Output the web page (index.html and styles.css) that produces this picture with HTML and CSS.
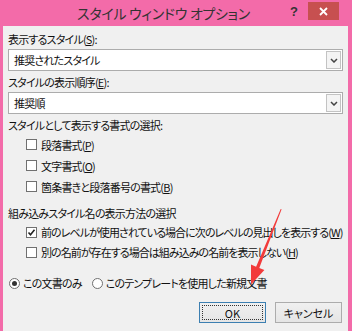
FILE: index.html
```html
<!DOCTYPE html>
<html lang="ja">
<head>
    <meta charset="UTF-8">
    <title>スタイル ウィンドウ オプション</title>
    <link rel="stylesheet" href="styles.css">
</head>
<body>

<div class="window">
    <div class="titlebar">
        <span class="title">スタイル ウィンドウ オプション</span>
        <span class="help">?</span>
        <span class="close">
            <svg width="9" height="9" viewBox="0 0 9 9"><path d="M1 1L8 8M8 1L1 8" stroke="#fff" stroke-width="1.8"/></svg>
        </span>
    </div>

    <div class="content">
        <div class="label">表示するスタイル(<u>S</u>):</div>
        <div class="select">
            <span class="value">推奨されたスタイル</span>
            <span class="drop"><svg width="8" height="5" viewBox="0 0 8 5"><path d="M1 1L4 4L7 1" fill="none" stroke="#444" stroke-width="1.5"/></svg></span>
        </div>

        <div class="label gap2">スタイルの表示順序(<u>E</u>):</div>
        <div class="select">
            <span class="value">推奨順</span>
            <span class="drop"><svg width="8" height="5" viewBox="0 0 8 5"><path d="M1 1L4 4L7 1" fill="none" stroke="#444" stroke-width="1.5"/></svg></span>
        </div>

        <div class="label gap3 short">スタイルとして表示する書式の選択:</div>
        <div class="opt tall"><span class="cb"></span>段落書式(<u>P</u>)</div>
        <div class="opt tall"><span class="cb"></span>文字書式(<u>O</u>)</div>
        <div class="opt tall"><span class="cb"></span>箇条書きと段落番号の書式(<u>B</u>)</div>

        <div class="label gap7">組み込みスタイル名の表示方法の選択</div>
        <div class="opt"><span class="cb checked"><svg width="9" height="9" viewBox="0 0 9 9"><path d="M1.5 4.5L3.5 6.8L7.5 1.8" fill="none" stroke="#222" stroke-width="1.6"/></svg></span>前のレベルが使用されている場合に次のレベルの見出しを表示する(<u>W</u>)</div>
        <div class="opt"><span class="cb"></span>別の名前が存在する場合は組み込みの名前を表示しない(<u>H</u>)</div>

        <div class="radios">
            <span class="radio on"></span><span class="rtext">この文書のみ</span>
            <span class="radio"></span><span class="rtext">このテンプレートを使用した新規文書</span>
        </div>

        <div class="buttons">
            <div class="btn default"><span class="focus">OK</span></div>
            <div class="btn">キャンセル</div>
        </div>
    </div>

    <svg class="arrow" width="352" height="331" viewBox="0 0 352 331">
        <polygon points="280.7,208.9 281.6,209.2 259.3,267.9 264.4,270 251,284.5 251,264.6 256.1,266.7" fill="#f23b3b"/>
    </svg>
</div>

</body>
</html>
```

FILE: styles.css
```css
* {
    box-sizing: border-box;
}

body {
    margin: 0;
    font-family: "Noto Sans CJK JP", "Noto Sans", sans-serif;
    font-size: 11px;
    letter-spacing: -0.8px;
    color: #111;
    font-feature-settings: "palt";
}

.window {
    position: relative;
    width: 352px;
    height: 331px;
    background: #f36ba9;
    padding: 0 4px 0 3px;
    display: flex;
    flex-direction: column;
    overflow: hidden;
}

/* title bar */
.titlebar {
    height: 26px;
    flex: none;
    display: flex;
    align-items: flex-start;
    padding-left: 40px;
}

.title {
    flex: 1;
    text-align: center;
    font-size: 14px;
    letter-spacing: -0.3px;
    line-height: 26px;
    color: #333;
}

.help {
    width: 20px;
    margin-right: 4px;
    line-height: 24px;
    text-align: center;
    font-family: "Liberation Sans", sans-serif;
    font-weight: bold;
    font-size: 13px;
    letter-spacing: 0;
    color: #333;
}

.close {
    width: 31px;
    height: 18px;
    margin-top: 2px;
    margin-right: 9px;
    background: #c75050;
    display: flex;
    align-items: center;
    justify-content: center;
}

/* dialog body */
.content {
    flex: 1;
    background: #f0f0f0;
    padding: 4px 5px 0 5px;
}

.label {
    line-height: 18px;
    height: 18px;
}

.label.short {
    height: 17px;
    line-height: 17px;
}

.gap2 { margin-top: 2px; }
.gap3 { margin-top: 3px; }
.gap7 { margin-top: 7px; }

.select {
    margin-top: 1px;
    height: 22px;
    border: 1px solid #acacac;
    background: #fff;
    display: flex;
    align-items: center;
    padding: 1px;
}

.select .value {
    flex: 1;
    padding-left: 4px;
}

.select .drop {
    width: 15px;
    height: 18px;
    border: 1px solid #c3c3c3;
    background: #f4f4f4;
    display: flex;
    align-items: center;
    justify-content: center;
}

.opt {
    display: flex;
    align-items: center;
    height: 20px;
    padding-left: 18px;
    white-space: nowrap;
    letter-spacing: -0.95px;
}

.opt.tall {
    height: 21px;
    letter-spacing: -0.8px;
}

.cb {
    width: 11px;
    height: 11px;
    border: 1px solid #707070;
    background: #fff;
    margin-right: 4px;
    flex: none;
    display: flex;
    align-items: center;
    justify-content: center;
}

.radios {
    margin-top: 11px;
    height: 20px;
    display: flex;
    align-items: center;
    padding-left: 1px;
    white-space: nowrap;
}

.radio {
    width: 11px;
    height: 11px;
    border: 1px solid #707070;
    border-radius: 50%;
    background: #fff;
    margin-right: 3px;
    display: flex;
    align-items: center;
    justify-content: center;
    flex: none;
}

.radio.on::before {
    content: "";
    width: 5px;
    height: 5px;
    border-radius: 50%;
    background: #333;
}

.rtext {
    margin-right: 10px;
}

.buttons {
    margin-top: 9px;
    display: flex;
    justify-content: flex-end;
    gap: 9px;
    padding-right: 1px;
}

.btn {
    width: 67px;
    height: 21px;
    border: 1px solid #acacac;
    background: linear-gradient(#f0f0f0, #e5e5e5);
    display: flex;
    align-items: center;
    justify-content: center;
    letter-spacing: 0;
}

.btn.default {
    border-color: #3c7fb1;
    padding: 2px;
}

.btn .focus {
    flex: 1;
    align-self: stretch;
    border: 1px dotted #333;
    display: flex;
    align-items: center;
    justify-content: center;
}

.arrow {
    position: absolute;
    top: 0;
    left: 0;
    pointer-events: none;
}
```
